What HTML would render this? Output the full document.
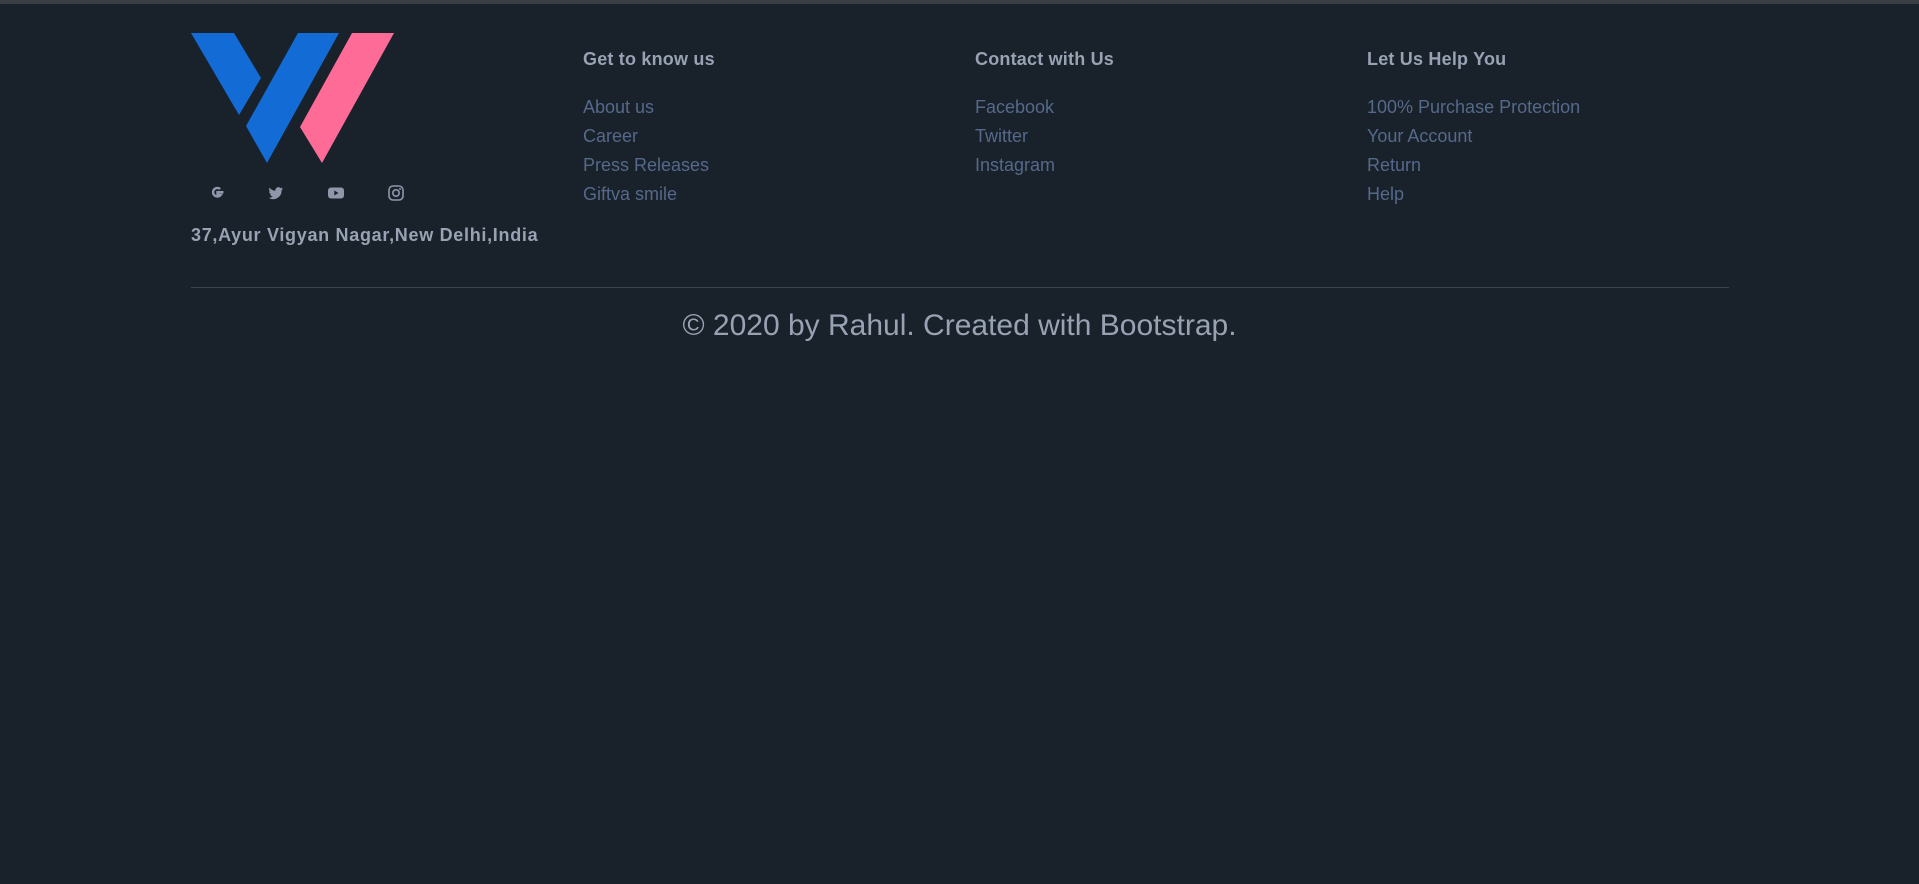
<!DOCTYPE html>
<html><head><style>
html,body{margin:0;padding:0;}
body{width:1919px;height:884px;background:#19212b;position:relative;overflow:hidden;font-family:"Liberation Sans",sans-serif;border-top:4px solid #3b3e44;box-sizing:border-box;}
.a{position:absolute;white-space:nowrap;}
h5{margin:0;position:absolute;font-size:18px;font-weight:bold;color:#98a2b3;top:45px;letter-spacing:0.2px}
.l{position:absolute;font-size:18px;color:#55698a;line-height:29px;top:89px;}
.ic{position:absolute;top:180px;width:18px;height:18px;}
</style></head><body>
<svg class="a" style="left:0;top:-4px" width="420" height="170">
<polygon points="191,33 234,33 261,78 239,115" fill="#136bd6"/>
<polygon points="298,33 339,33 267,163 246,126" fill="#136bd6"/>
<polygon points="352,33 394,33 322,163 300,127" fill="#ff6b97"/>
</svg>
<svg class="ic" style="left:208px" viewBox="0 0 18 18"><path d="M15.5 8.2H9.5v2.6h3.3A4.3 4.3 0 1 1 12.2 5" fill="none" stroke="#8e98aa" stroke-width="2.4"/></svg>
<svg class="ic" style="left:267px" viewBox="0 0 18 18"><path d="M16 4.5c-.5.3-1.2.4-1.7.5.6-.4 1-1 1.2-1.6-.6.3-1.2.6-1.9.7A3 3 0 0 0 8.5 6.8 8.5 8.5 0 0 1 2.5 3.7a3 3 0 0 0 .9 4c-.5 0-1-.2-1.4-.4 0 1.5 1 2.7 2.4 3-.4.1-.9.2-1.4.1.4 1.2 1.5 2 2.8 2.1A6 6 0 0 1 1.5 13.8 8.5 8.5 0 0 0 14.6 6.6V6.2c.6-.4 1-.9 1.4-1.7z" fill="#8e98aa"/></svg>
<svg class="ic" style="left:327px" viewBox="0 0 18 18"><rect x="1" y="3.5" width="16" height="11" rx="3" fill="#8e98aa"/><path d="M7.3 6.5v5l4.2-2.5z" fill="#19212b"/></svg>
<svg class="ic" style="left:387px" viewBox="0 0 18 18"><rect x="2" y="2" width="14" height="14" rx="4" fill="none" stroke="#8e98aa" stroke-width="1.6"/><circle cx="9" cy="9" r="3.2" fill="none" stroke="#8e98aa" stroke-width="1.6"/><circle cx="13" cy="5" r="1" fill="#8e98aa"/></svg>
<div class="a" style="left:191px;top:221px;font-size:18px;font-weight:bold;color:#98a2b3;letter-spacing:0.7px">37,Ayur Vigyan Nagar,New Delhi,India</div>
<h5 style="left:583px">Get to know us</h5>
<h5 style="left:975px">Contact with Us</h5>
<h5 style="left:1367px">Let Us Help You</h5>
<div class="l" style="left:583px">About us<br>Career<br>Press Releases<br>Giftva smile</div>
<div class="l" style="left:975px">Facebook<br>Twitter<br>Instagram</div>
<div class="l" style="left:1367px">100% Purchase Protection<br>Your Account<br>Return<br>Help</div>
<div class="a" style="left:191px;top:283px;width:1538px;height:1px;background:#3a434f"></div>
<div class="a" style="left:0;width:1919px;text-align:center;top:305px;font-size:30px;color:#98a2b3;letter-spacing:0px">© 2020 by Rahul. Created with Bootstrap.</div>
</body></html>
